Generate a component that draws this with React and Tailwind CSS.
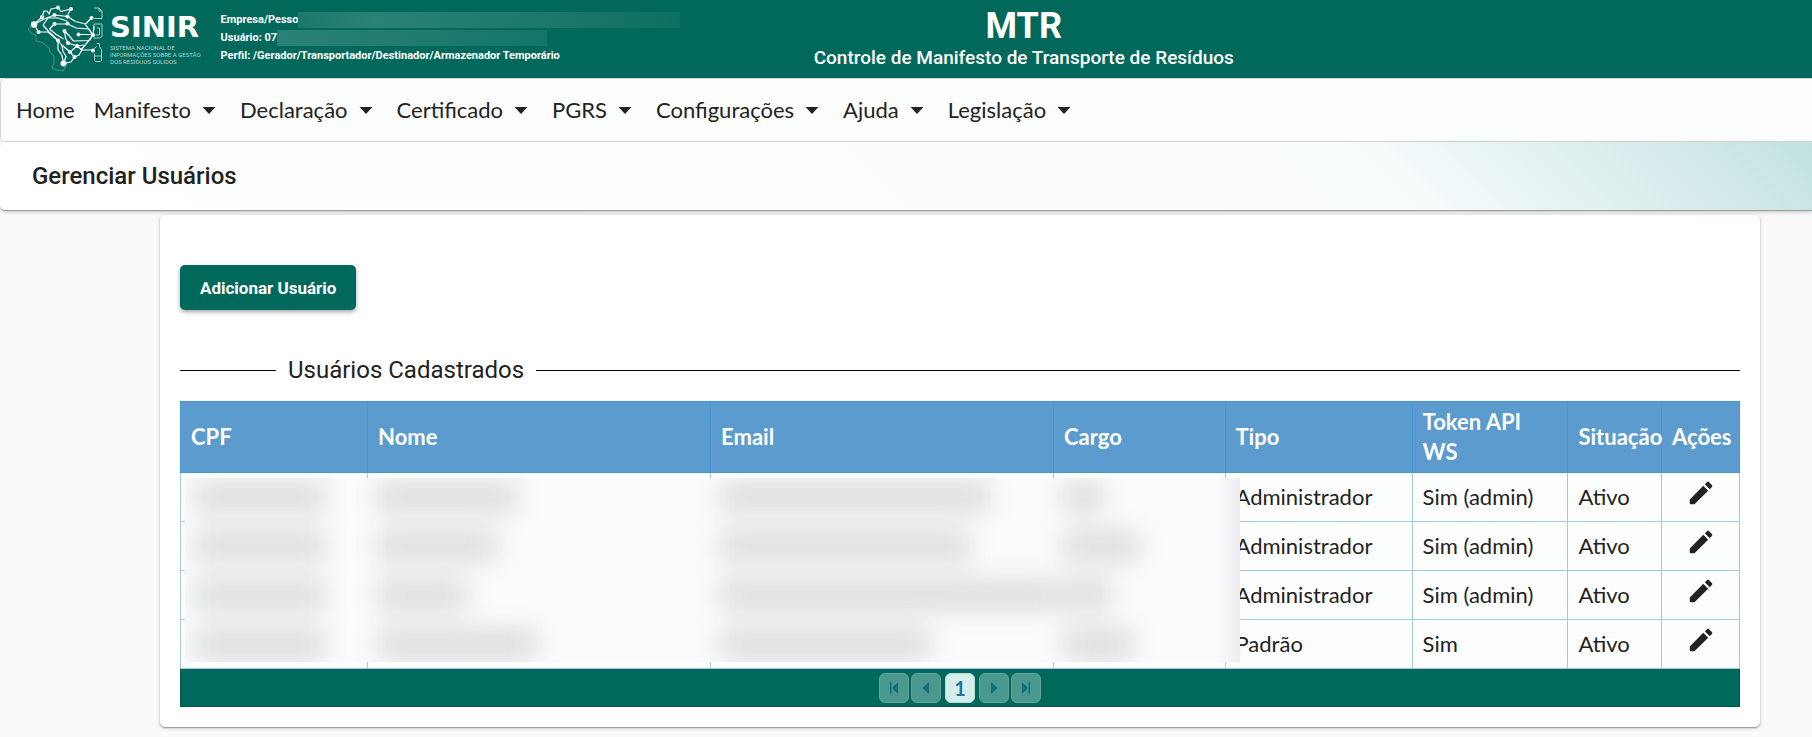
const menu = [
  { label: "Home" },
  { label: "Manifesto", sub: true },
  { label: "Declaração", sub: true },
  { label: "Certificado", sub: true },
  { label: "PGRS", sub: true },
  { label: "Configurações", sub: true },
  { label: "Ajuda", sub: true },
  { label: "Legislação", sub: true },
];

const columns = [
  { label: "CPF", width: "w-[12%]" },
  { label: "Nome", width: "w-[22%]" },
  { label: "Email", width: "w-[22%]" },
  { label: "Cargo", width: "w-[11%]" },
  { label: "Tipo", width: "w-[12%]" },
  { label: "Token API WS", width: "w-[10%]" },
  { label: "Situação", width: "w-[6%]" },
  { label: "Ações", width: "w-[5%]" },
];

const users = [
  { tipo: "Administrador", token: "Sim (admin)", situacao: "Ativo" },
  { tipo: "Administrador", token: "Sim (admin)", situacao: "Ativo" },
  { tipo: "Administrador", token: "Sim (admin)", situacao: "Ativo" },
  { tipo: "Padrão", token: "Sim", situacao: "Ativo" },
];

// Smudge widths of the hidden values, one row per user.
const masked = [
  ["w-[130px]", "w-[140px]", "w-[270px]", "w-[40px]"],
  ["w-[130px]", "w-[120px]", "w-[250px]", "w-[76px]"],
  ["w-[130px]", "w-[90px]", "w-[340px]", "w-[48px]"],
  ["w-[130px]", "w-[160px]", "w-[210px]", "w-[70px]"],
];

const nodes = [
  [34, 7.5, 2], [47, 9, 2], [30.5, 15, 2], [43.5, 16.5, 2], [67.5, 18, 2], [18, 17, 2],
  [10, 24.5, 3.2], [30.5, 24, 2], [43.5, 23.5, 2], [14.5, 32, 2], [40.5, 31, 2], [69, 35, 2],
  [54.5, 34.5, 2], [34, 40.5, 2], [44, 43, 2], [53, 46, 2], [46, 52, 2], [50.5, 57, 2],
  [39.5, 63.5, 3], [69, 50.5, 2],
];

function Logo() {
  return (
    <a href="#inicio" aria-label="SINIR" className="flex shrink-0 items-center">
      <svg viewBox="0 0 84 78" className="h-[78px] w-[84px]" fill="none" stroke="#fff" aria-hidden="true">
        <path
          d="M10 24.5 4 29l4 5 4 1v6l7 2 6 5 1 4 4 4v7l-2 5 5 2 6 1 3-5"
          strokeWidth=".6"
          opacity=".45"
        />
        <g strokeWidth="1.2" strokeLinejoin="round">
          <path d="M10 24.5 18 17l2-6h3l2 3 2-5 7-1.500 3 4 10-2.500-3 5" />
          <path d="M10 24.500 20 19l10.500-4 13 1.500 8 5 10 2.500 6-6" />
          <path d="M10 24.500 14.500 32H24l10 8.500v9l4 6 1.500 8" />
          <path d="M19 25 24 18h10l9 3M19 25l6 7 9 8.500" />
          <path d="M30.500 24h13l9 4 12 1 4.500 6M30.500 24l-5 5 6 5 8 5" />
          <path d="M40.500 31l4 4 5 6 16-.500L69 35M40.500 31l1 7 2.500 5 9 3 7-1" />
          <path d="M54.500 34.500H69l-5 7-7 8.500h12" />
          <path d="M38 45l8 7 7-6 5 4-3 5-4.500 2L47 62l-7.500 1.500M46 52l4.500 5M34 40.500l4 5 1 6 3 5-2.500 7" />
          <path d="M61 24l3 4 5 7 1-9" />
        </g>
        <g fill="#fff" stroke="none">
          {nodes.map(([cx, cy, r]) => (
            <circle key={`${cx}-${cy}`} cx={cx} cy={cy} r={r} />
          ))}
        </g>
        <g strokeWidth=".9" opacity=".75">
          <path d="M70 8h5l3 3v7.500h-8M75 8v3h3" />
          <path d="M70 30v-6h8v12.500l-2 1.500h-6.500M72.500 28h3v7h-4" />
          <path d="M72.500 43.500h3v3l2 3v11l-1 1h-5l-1-1v-7M70.500 48.500l2-2M71 56h6.500" />
        </g>
      </svg>
      <span className="ml-0.5 flex flex-col text-white">
        <span className="font-[DejaVu_Sans] text-[29px] leading-[26px] font-bold">SINIR</span>
        <span className="mt-1 font-[Roboto] text-[6px] leading-[7px] whitespace-nowrap text-white/70">
          SISTEMA NACIONAL DE
          <br />
          INFORMAÇÕES SOBRE A GESTÃO
          <br />
          DOS RESÍDUOS SÓLIDOS
        </span>
      </span>
    </a>
  );
}

function Header() {
  return (
    <header className="grid h-[78px] grid-cols-[375fr_380fr_245fr] bg-[#00695c] font-[Roboto] text-white">
      <div className="flex min-w-0 items-center pl-6">
        <Logo />
        <div className="ml-5 min-w-0 flex-1 pb-0.5 text-[11px] leading-[18px] font-bold whitespace-nowrap">
          <p className="flex items-center">
            Empresa/Pesso
            <span className="h-4 flex-1 bg-linear-to-r from-[#1d776b] via-[#2a8277] via-20% to-[#0d6f63]" />
          </p>
          <p className="flex items-center">
            Usuário: 07
            <span className="h-4 w-[270px] bg-linear-to-r from-[#2a8277] to-[#15746a]" />
          </p>
          <p>Perfil: /Gerador/Transportador/Destinador/Armazenador Temporário</p>
        </div>
      </div>
      <div className="flex flex-col items-center justify-center pb-0.5 text-center">
        <h1 className="text-[36px] leading-[40px] font-bold">MTR</h1>
        <p className="text-[19px] leading-6 font-medium whitespace-nowrap">
          Controle de Manifesto de Transporte de Resíduos
        </p>
      </div>
    </header>
  );
}

function Menu() {
  return (
    <nav className="h-16 rounded-l-[5px] border border-r-0 border-[#d5d5d5] bg-[#fcfefd]">
      <ul className="flex h-full items-center gap-[19px] pl-[15px]">
        {menu.map((item) => (
          <li key={item.label}>
            <a href="#menu" className="flex items-center gap-1.5">
              {item.label}
              {item.sub && (
                <svg viewBox="0 0 24 24" className="size-6" fill="#222" aria-hidden="true">
                  <path d="M5.500 9h13l-6.500 7z" />
                </svg>
              )}
            </a>
          </li>
        ))}
      </ul>
    </nav>
  );
}

function MaskedValues() {
  return (
    <div
      aria-hidden="true"
      className="absolute top-[77px] left-[5px] h-[184px] w-[67.6%] overflow-hidden bg-[#fafbfc]"
    >
      <div className="-mt-1.5 grid auto-rows-[49px] blur-[12px]">
        {masked.map((row, i) => (
          <div
            key={i}
            className="grid grid-cols-[minmax(0,182fr)_minmax(0,343fr)_minmax(0,343fr)_minmax(0,187fr)] items-center"
          >
            {row.map((width, j) => (
              <span key={j} className={`${width} ml-2.5 h-8 bg-[#dddfdf]`} />
            ))}
          </div>
        ))}
      </div>
      <div className="absolute inset-y-0 right-0 w-6 bg-linear-to-r from-transparent to-[#eceef0]" />
    </div>
  );
}

function PencilIcon() {
  return (
    <svg viewBox="0 0 24 24" className="size-[30px]" fill="#222" aria-hidden="true">
      <path d="M3 17.200V20.200Q3 21 3.800 21H6.800L17.700 10.100l-3.900-3.900zM19 8.900l1.700-1.700a1.200 1.200 0 0 0 0-1.700l-2.200-2.200a1.200 1.200 0 0 0-1.700 0l-1.700 1.700z" />
    </svg>
  );
}

function PagerButton({ label, d }) {
  return (
    <button
      type="button"
      disabled
      aria-label={label}
      className="flex size-[30px] items-center justify-center rounded-md border border-[#5fa59d] bg-[#4b988f]"
    >
      <svg viewBox="0 0 16 16" className="size-4" fill="#0f7078" aria-hidden="true">
        <path d={d} />
      </svg>
    </button>
  );
}

function Pager() {
  return (
    <div className="flex h-[38px] items-center justify-center gap-1 border border-t-0 border-[#00594e] bg-[#00695c]">
      <div className="flex gap-0.5">
        <PagerButton label="Primeira página" d="M4 2h1.500v12H4zM12 2v12L6 8z" />
        <PagerButton label="Página anterior" d="M11 2v12L4.500 8z" />
      </div>
      <button
        type="button"
        aria-current="page"
        className="size-[30px] rounded-md border border-[#b9dcd8] bg-[#d4efeb] text-[20px] leading-7 font-bold text-[#2a6fa0]"
      >
        1
      </button>
      <div className="flex gap-0.5">
        <PagerButton label="Próxima página" d="M5 2v12l6.500-6z" />
        <PagerButton label="Última página" d="M4 2v12l6-6zM10.500 2H12v12h-1.500z" />
      </div>
    </div>
  );
}

function UsersTable() {
  return (
    <div className="relative">
      <table className="w-full table-fixed border-collapse">
        <thead>
          <tr className="h-[71px] bg-[#5b9bcd] text-left text-white">
            {columns.map((c) => (
              <th
                key={c.label}
                scope="col"
                className={`${c.width} border border-[#4497d6] px-2.5 leading-[30px] font-bold`}
              >
                {c.label}
              </th>
            ))}
          </tr>
        </thead>
        <tbody>
          {users.map((u, i) => (
            <tr key={i} className="h-[49px] bg-[#fcfefd]">
              <td className="border border-[#a6c9e2]" />
              <td className="border border-[#a6c9e2]" />
              <td className="border border-[#a6c9e2]" />
              <td className="border border-[#a6c9e2]" />
              <td className="border border-[#a6c9e2] pl-2.5">{u.tipo}</td>
              <td className="border border-[#a6c9e2] pl-2.5">{u.token}</td>
              <td className="border border-[#a6c9e2] pl-2.5">{u.situacao}</td>
              <td className="border border-[#a6c9e2] pb-2">
                <button type="button" aria-label="Editar" className="mx-auto block">
                  <PencilIcon />
                </button>
              </td>
            </tr>
          ))}
        </tbody>
      </table>
      <MaskedValues />
    </div>
  );
}

export default function App() {
  return (
    <div className="min-h-screen bg-[#fafafa] font-[Lato,sans-serif] text-[22px] leading-[30px] text-[#222]">
      <Header />
      <Menu />
      <div className="flex h-[68px] items-center rounded-l-[5px] bg-linear-[45deg] from-white via-[#f9fcfd] via-75% to-[#c2e1e1] px-8 shadow-[0_1px_1px_#999,0_2px_4px_rgba(0,0,0,.2)]">
        <h2 className="font-[Roboto] text-[24px] font-medium">Gerenciar Usuários</h2>
      </div>
      <main className="mt-[5px] mr-[52px] ml-40 rounded-[5px] bg-white px-5 pt-[50px] pb-5 shadow-[0_1px_1px_#999,0_1px_4px_rgba(0,0,0,.2)]">
        <button
          type="button"
          className="h-[45px] rounded-[5px] bg-[#00695c] px-5 font-[Roboto] text-[17px] font-bold text-white shadow-[0_2px_4px_rgba(0,0,0,.35)]"
        >
          Adicionar Usuário
        </button>
        <section className="mt-[45px]">
          <div className="mb-4 flex items-center gap-3">
            <span className="h-px w-24 bg-black" />
            <h3 className="font-[Roboto] text-[24px] font-normal">Usuários Cadastrados</h3>
            <span className="h-px flex-1 bg-black" />
          </div>
          <UsersTable />
          <Pager />
        </section>
      </main>
    </div>
  );
}
